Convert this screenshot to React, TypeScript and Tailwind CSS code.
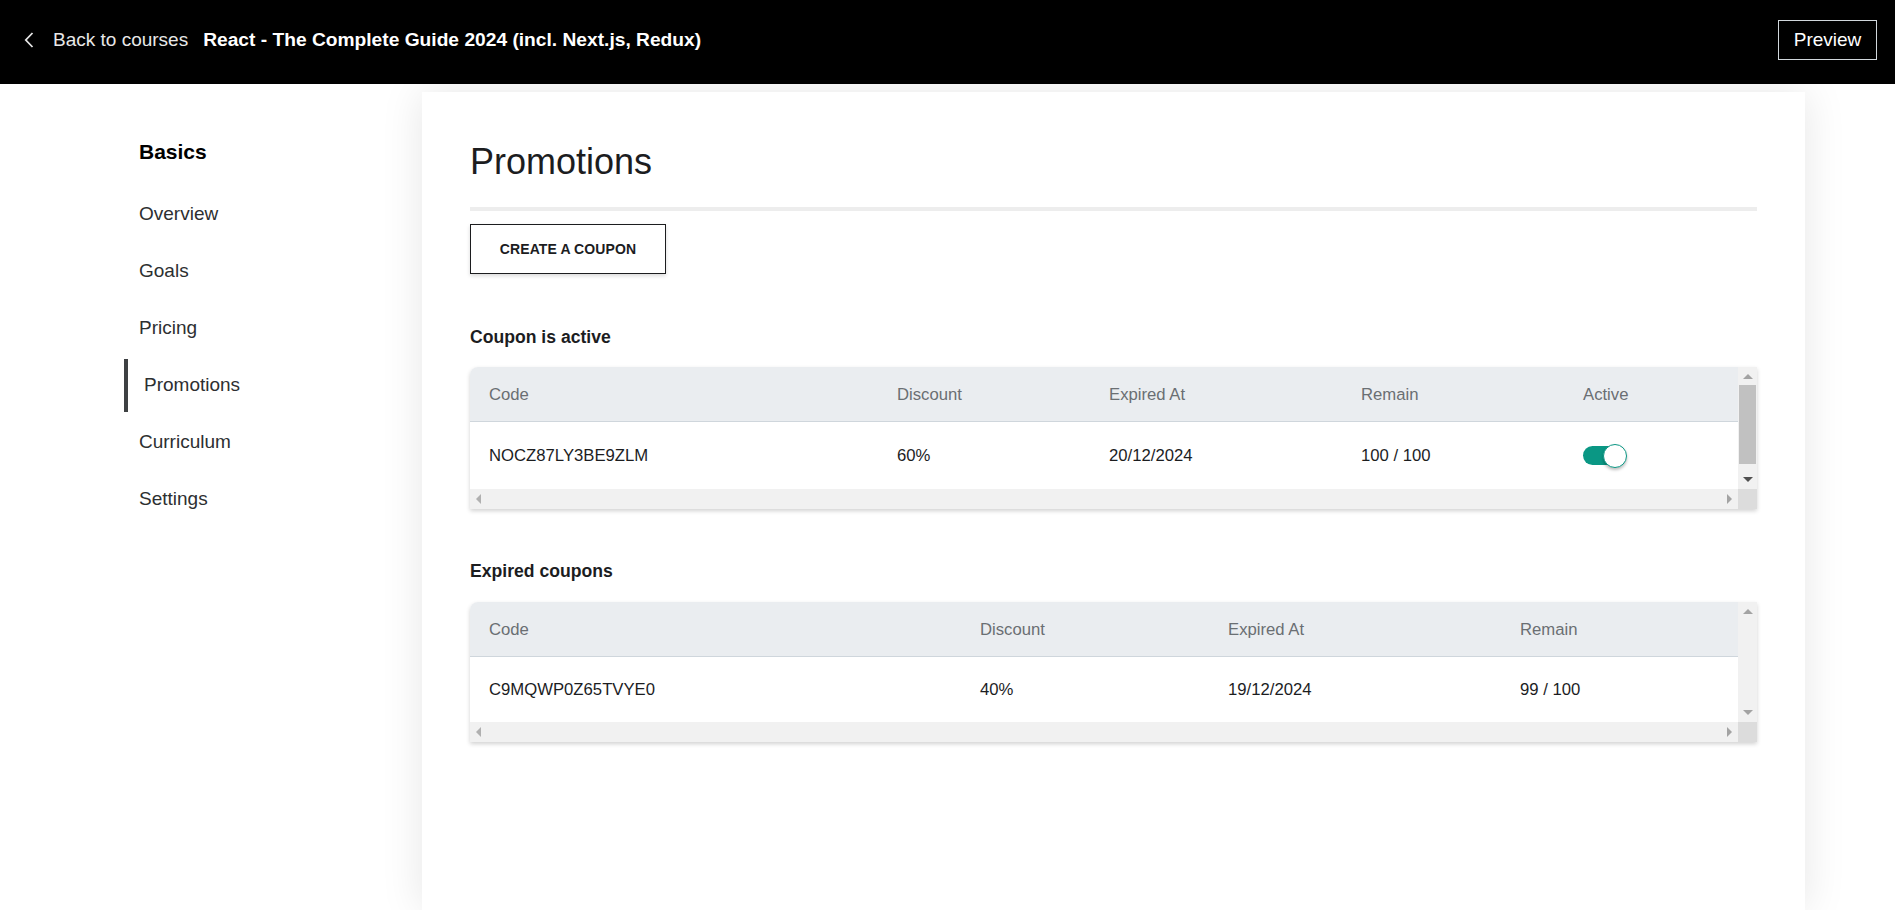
import React from "react";

const navItems = [
  { name: "Overview", active: false },
  { name: "Goals", active: false },
  { name: "Pricing", active: false },
  { name: "Promotions", active: true },
  { name: "Curriculum", active: false },
  { name: "Settings", active: false },
];

type Col = { label: string; width: string };

const activeCols: Col[] = [
  { label: "Code", width: "w-[408px]" },
  { label: "Discount", width: "w-[212px]" },
  { label: "Expired At", width: "w-[252px]" },
  { label: "Remain", width: "w-[222px]" },
  { label: "Active", width: "w-[173px]" },
];

const expiredCols: Col[] = [
  { label: "Code", width: "w-[491px]" },
  { label: "Discount", width: "w-[248px]" },
  { label: "Expired At", width: "w-[292px]" },
  { label: "Remain", width: "w-[236px]" },
];

const Arrow = ({ dir, color }: { dir: "up" | "down" | "left" | "right"; color: string }) => {
  const pts = {
    up: "0,6 5,1 10,6",
    down: "0,1 5,6 10,1",
    left: "6,0 1,5 6,10",
    right: "1,0 6,5 1,10",
  }[dir];
  const size = dir === "up" || dir === "down" ? { w: 10, h: 7 } : { w: 7, h: 10 };
  return (
    <svg width={size.w} height={size.h} viewBox={`0 0 ${size.w} ${size.h}`}>
      <polygon points={pts} fill={color} />
    </svg>
  );
};

const Toggle = () => (
  <div className="relative w-[44px] h-[24px] flex items-center">
    <div className="w-[36px] h-[19px] rounded-full bg-[#0a9784]" />
    <div className="absolute right-0 top-0 w-[24px] h-[24px] rounded-full bg-white border border-[#0a9784] shadow-[0_2px_3px_rgba(0,0,0,0.25)]" />
  </div>
);

const CouponTable = ({
  cols,
  rows,
  rowHeight,
  thumb,
}: {
  cols: Col[];
  rows: React.ReactNode[][];
  rowHeight: string;
  thumb: boolean;
}) => (
  <div className="rounded-tl-lg shadow-[0_2px_4px_rgba(0,0,0,0.18)] overflow-hidden">
    <div className="flex">
      <div className="flex-1">
        <div className="flex h-[55px] items-center bg-[#eaedf0] border-b border-[#cfd6dc] text-[16.7px] text-[#6a6f73]">
          {cols.map((c) => (
            <div key={c.label} className={`${c.width} pl-[19px]`}>
              {c.label}
            </div>
          ))}
        </div>
        {rows.map((r, i) => (
          <div key={i} className={`flex ${rowHeight} items-center bg-white text-[16.7px] text-[#1c1d1f]`}>
            {r.map((cell, j) => (
              <div key={j} className={`${cols[j].width} pl-[19px]`}>
                {cell}
              </div>
            ))}
          </div>
        ))}
      </div>
      {/* vertical scrollbar */}
      <div className="w-[19px] bg-[#f1f1f1] flex flex-col items-center">
        <div className="h-[18px] flex items-center justify-center">
          <Arrow dir="up" color="#a3a3a3" />
        </div>
        <div className="flex-1 w-full px-[1px]">
          {thumb && <div className="h-[79px] bg-[#c1c1c1]" />}
        </div>
        <div className="h-[20px] flex items-center justify-center">
          <Arrow dir="down" color={thumb ? "#505050" : "#a3a3a3"} />
        </div>
      </div>
    </div>
    {/* horizontal scrollbar */}
    <div className="flex h-[20px]">
      <div className="flex-1 bg-[#f1f1f1] flex items-center justify-between px-[5px]">
        <Arrow dir="left" color="#b0b0b0" />
        <Arrow dir="right" color="#a3a3a3" />
      </div>
      <div className="w-[19px] bg-[#dcdcdc]" />
    </div>
  </div>
);

export default function App() {
  return (
    <div className="min-h-screen bg-white font-['Liberation_Sans',Arial,sans-serif] text-[#1c1d1f]">
      {/* Top bar */}
      <header className="h-[84px] bg-black flex items-center justify-between pl-[24px] pr-[18px] pb-[4px]">
        <div className="flex items-center">
          <svg width="10" height="16" viewBox="0 0 10 16" className="mr-[19px]">
            <path d="M8.5 1 L1.8 8 L8.5 15" stroke="#e5e5e5" strokeWidth="1.8" fill="none" />
          </svg>
          <span className="text-[19px] text-[#e8e8e8]">Back to courses</span>
          <span className="ml-[15px] text-[19.2px] font-bold text-white">
            React - The Complete Guide 2024 (incl. Next.js, Redux)
          </span>
        </div>
        <button className="h-[40px] w-[99px] border border-[#d1d7dc] text-white text-[19px]">
          Preview
        </button>
      </header>

      <div className="flex">
        {/* Sidebar */}
        <aside className="w-[422px] pl-[124px] pt-[52px]">
          <div className="pl-[15px] text-[21px] font-bold text-black">Basics</div>
          <nav className="mt-[20px] flex flex-col gap-1">
            {navItems.map((item) => (
              <div
                key={item.name}
                className={`h-[53px] flex items-center text-[19px] text-[#2d2f31] ${
                  item.active ? "border-l-4 border-[#3e4143] pl-[16px]" : "pl-[15px]"
                }`}
              >
                {item.name}
              </div>
            ))}
          </nav>
        </aside>

        {/* Main card */}
        <main className="mt-2 w-[1383px] min-h-[818px] bg-white shadow-[0_0_40px_rgba(0,0,0,0.10)] px-12 pt-[48px]">
          <h1 className="text-[36px] leading-[1.2] text-[#1c1d1f]">Promotions</h1>
          <div className="mt-[24px] h-[4px] bg-[#ededed]" />
          <button className="mt-[13px] w-[196px] h-[50px] border border-[#1c1d1f] bg-white text-[14px] font-bold tracking-[0.1px] shadow-[0_2px_4px_rgba(0,0,0,0.15)]">
            CREATE A COUPON
          </button>

          <h3 className="mt-[53px] text-[17.6px] font-bold leading-[21px]">Coupon is active</h3>
          <div className="mt-[19px]">
            <CouponTable
              cols={activeCols}
              rowHeight="h-[67px]"
              thumb
              rows={[["NOCZ87LY3BE9ZLM", "60%", "20/12/2024", "100 / 100", <Toggle key="t" />]]}
            />
          </div>

          <h3 className="mt-[52px] text-[17.6px] font-bold leading-[21px]">Expired coupons</h3>
          <div className="mt-[20px]">
            <CouponTable
              cols={expiredCols}
              rowHeight="h-[65px]"
              thumb={false}
              rows={[["C9MQWP0Z65TVYE0", "40%", "19/12/2024", "99 / 100"]]}
            />
          </div>
        </main>
      </div>
    </div>
  );
}
